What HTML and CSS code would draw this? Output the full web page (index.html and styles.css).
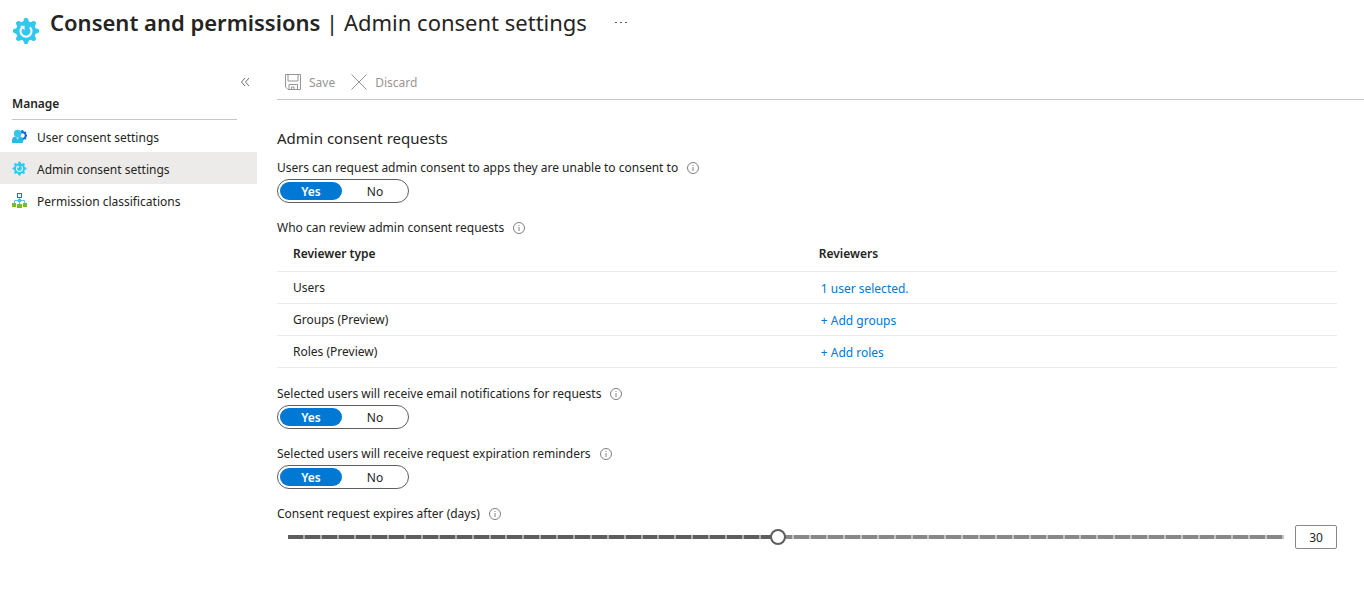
FILE: index.html
```html
<!DOCTYPE html>
<html lang="en">

<head>
    <meta charset="UTF-8">
    <meta name="viewport" content="width=device-width, initial-scale=1.0">
    <link rel="stylesheet" href="styles.css">
    <title>Consent and permissions</title>
</head>

<body>
    <svg class="defs" aria-hidden="true">
        <symbol id="gear" viewBox="0 0 28 28">
            <g fill="#32c8ee">
                <circle cx="14" cy="14" r="10" />
                <g id="teeth">
                    <path d="M11 5l1-3q.4-1 1.200-1h1.600q.8 0 1.200 1l1 3v18l-1 3q-.4 1-1.200 1h-1.600q-.8 0-1.200-1l-1-3z" />
                    <path d="M5 11l-3 1q-1 .4-1 1.200v1.600q0 .8 1 1.200l3 1h18l3-1q1-.4 1-1.200v-1.600q0-.8-1-1.200l-3-1z" />
                </g>
                <use href="#teeth" transform="rotate(45 14 14)" />
            </g>
            <path d="M10.200 10.200a5.500 5.500 0 1 0 7.600 0" fill="none" stroke="#fff" stroke-width="2" />
            <path d="M8 8.800h4.500v4.500z" fill="#fff" />
        </symbol>
        <symbol id="info" viewBox="0 0 12 12">
            <circle cx="6" cy="6" r="5.500" fill="none" stroke="#605e5c" stroke-width="0.800" />
            <path d="M6 5v4M6 3v1" stroke="#605e5c" stroke-width="0.800" />
        </symbol>
    </svg>

    <header class="title-bar">
        <svg class="title-icon"><use href="#gear" /></svg>
        <h1><strong>Consent and permissions</strong> | Admin consent settings</h1>
        <button class="more" aria-label="More">
            <svg width="12" height="2" fill="#605e5c"><rect width="2" height="1" /><rect x="5" width="2" height="1" /><rect x="10" width="2" height="1" /></svg>
        </button>
    </header>

    <div class="layout">
        <nav class="sidebar">
            <button class="collapse" aria-label="Collapse menu">
                <svg width="8" height="8" fill="none" stroke="#605e5c" stroke-width="0.9"><path d="M4 0L0.5 4L4 8M8 0L4.5 4L8 8" /></svg>
            </button>
            <h2>Manage</h2>
            <a class="item" href="#">
                <svg viewBox="0 0 16 16">
                    <circle cx="11" cy="7" r="3.600" fill="none" stroke="#0f6cd6" stroke-width="2" />
                    <path d="M11 1v2.500M11 10.500v2.500M14 7h2M13.200 4.800l1.600-1.600M13.200 9.200l1.600 1.600" stroke="#0f6cd6" stroke-width="2" />
                    <path d="M0 15v-3C0 9.500 1.500 8 4 8h4c2.500 0 3.500 1.500 3.500 4v3z" fill="#2bb8e6" />
                    <path d="M4.300 8h3.400L6 12z" fill="#a5e8f8" />
                    <circle cx="6" cy="4.700" r="4" fill="#32c8ee" />
                </svg>
                User consent settings
            </a>
            <a class="item active" href="#" aria-current="page">
                <svg><use href="#gear" /></svg>
                Admin consent settings
            </a>
            <a class="item" href="#">
                <svg viewBox="0 0 15 15">
                    <path d="M7.500 4v7M2.500 11V7.500h10V11" fill="none" stroke="#5cc4ec" />
                    <rect x="5.500" y="0.500" width="4" height="4" fill="#fff" stroke="#0f78d4" />
                    <rect x="6" y="6" width="3" height="3" fill="#32c8ee" />
                    <g fill="#76bc2d">
                        <rect x="0" y="10" width="4" height="4" />
                        <rect x="5" y="11" width="5" height="4" />
                        <rect x="11" y="10" width="4" height="4" />
                    </g>
                </svg>
                Permission classifications
            </a>
        </nav>

        <main>
            <div class="commands">
                <button disabled>
                    <svg viewBox="0 0 16 16"><path d="M0.500 0.500h15v15H3l-2.500-2.500zM3 0.500v6.500h10V0.500M4 15.500v-5h8.500v5M6.500 15.500v-2.500h2.500v2.500" /></svg>
                    Save
                </button>
                <button disabled>
                    <svg viewBox="0 0 16 16"><path d="M0.500 0.500l15 15M15.500 0.500l-15 15" /></svg>
                    Discard
                </button>
            </div>

            <form class="settings">
                <h2>Admin consent requests</h2>

                <div class="field" role="radiogroup" aria-labelledby="request-label">
                    <div class="label" id="request-label">Users can request admin consent to apps they are unable to consent to <svg><use href="#info" /></svg></div>
                    <div class="toggle">
                        <label><input type="radio" name="request" checked>Yes</label>
                        <label><input type="radio" name="request">No</label>
                    </div>
                </div>

                <div class="field">
                    <div class="label" id="review-label">Who can review admin consent requests <svg><use href="#info" /></svg></div>
                    <table aria-labelledby="review-label">
                        <thead>
                            <tr><th>Reviewer type</th><th>Reviewers</th></tr>
                        </thead>
                        <tbody>
                            <tr><td>Users</td><td><a href="#">1 user selected.</a></td></tr>
                            <tr><td>Groups (Preview)</td><td><a href="#">+ Add groups</a></td></tr>
                            <tr><td>Roles (Preview)</td><td><a href="#">+ Add roles</a></td></tr>
                        </tbody>
                    </table>
                </div>

                <div class="field" role="radiogroup" aria-labelledby="email-label">
                    <div class="label" id="email-label">Selected users will receive email notifications for requests <svg><use href="#info" /></svg></div>
                    <div class="toggle">
                        <label><input type="radio" name="email" checked>Yes</label>
                        <label><input type="radio" name="email">No</label>
                    </div>
                </div>

                <div class="field" role="radiogroup" aria-labelledby="reminder-label">
                    <div class="label" id="reminder-label">Selected users will receive request expiration reminders <svg><use href="#info" /></svg></div>
                    <div class="toggle">
                        <label><input type="radio" name="reminder" checked>Yes</label>
                        <label><input type="radio" name="reminder">No</label>
                    </div>
                </div>

                <div class="field">
                    <label class="label" for="days">Consent request expires after (days) <svg><use href="#info" /></svg></label>
                    <div class="slider">
                        <input type="range" id="days" min="1" max="60" value="30">
                        <input type="text" id="days-value" value="30" aria-label="Days">
                    </div>
                </div>
            </form>
        </main>
    </div>

    <script>
        const range = document.getElementById('days');
        const box = document.getElementById('days-value');

        function paint() {
            const part = (range.value - range.min) / (range.max - range.min);
            range.style.setProperty('--fill', part * 100 + '%');
        }

        range.addEventListener('input', () => {
            box.value = range.value;
            paint();
        });
        box.addEventListener('change', () => {
            range.value = box.value;
            box.value = range.value;
            paint();
        });
        paint();
    </script>
</body>

</html>
```
FILE: styles.css
```css
* {
    box-sizing: border-box;
    margin: 0;
    padding: 0;
}

body {
    background-color: #fff;
    color: #252423;
    font-family: "Segoe UI", "Noto Sans", "Open Sans", sans-serif;
    font-size: 12px;
    line-height: 16px;
}

button,
input {
    font: inherit;
    color: inherit;
}

button {
    background: none;
    border: none;
}

a {
    color: #0078d4;
    text-decoration: none;
}

.defs {
    position: absolute;
    width: 0;
    height: 0;
}

.title-bar {
    display: flex;
    align-items: flex-start;
    padding: 6px 12px 0;
    height: 66px;
}

.title-icon {
    width: 28px;
    height: 28px;
    margin: 11px 10px 0 0;
}

h1 {
    font-size: 22px;
    font-weight: 400;
    line-height: 32px;
}

h1 strong {
    font-weight: 600;
}

.more {
    display: flex;
    align-items: center;
    height: 34px;
    margin-left: 28px;
}

.layout {
    display: flex;
}

.sidebar {
    display: flex;
    flex-direction: column;
    flex: 0 0 257px;
    margin-right: 20px;
}

.collapse {
    display: flex;
    align-self: flex-end;
    padding: 12px 8px 8px;
}

.sidebar h2 {
    margin: 0 20px 0 12px;
    padding: 2px 0 7px;
    border-bottom: 1px solid #c8c6c4;
    font-size: 12px;
    font-weight: 600;
    line-height: 16px;
}

.item {
    display: flex;
    align-items: center;
    gap: 10px;
    height: 32px;
    padding: 4px 12px 0;
    color: inherit;
}

.item svg {
    width: 15px;
    height: 15px;
    margin-bottom: 3px;
}

.item.active {
    background-color: #edebe9;
}

main {
    flex: 1;
    min-width: 0;
}

.commands {
    display: flex;
    gap: 16px;
    height: 34px;
    padding-left: 8px;
    border-bottom: 1px solid #c8c6c4;
}

.commands button {
    display: flex;
    align-items: center;
    gap: 8px;
    color: #979593;
}

.commands svg {
    width: 16px;
    height: 16px;
    margin-bottom: 2px;
    fill: none;
    stroke: #979593;
}

.settings {
    padding: 28px 27px 0 0;
}

.settings h2 {
    font-size: 15px;
    font-weight: 400;
    line-height: 20px;
    margin-bottom: 7px;
}

.field {
    margin-bottom: 12px;
}

.label {
    display: flex;
    align-items: center;
    gap: 9px;
    height: 24px;
    padding-top: 2px;
}

.label svg {
    width: 12px;
    height: 12px;
}

.toggle {
    display: inline-flex;
    gap: 2px;
    height: 24px;
    padding: 2px;
    border: 1px solid #605e5c;
    border-radius: 12px;
    vertical-align: top;
}

.toggle label {
    width: 62px;
    height: 18px;
    border-radius: 9px;
    line-height: 20px;
    text-align: center;
    cursor: pointer;
}

.toggle input {
    position: absolute;
    opacity: 0;
}

.toggle label:has(:checked) {
    background-color: #0078d4;
    color: #fff;
    font-weight: 600;
}

table {
    width: 100%;
    margin-bottom: 13px;
    table-layout: fixed;
    border-collapse: collapse;
}

th,
td {
    height: 32px;
    padding: 2px 0 0 16px;
    border-bottom: 1px solid #edebe9;
    text-align: left;
}

th {
    padding: 0 0 2px 16px;
    font-weight: 600;
}

th:first-child {
    width: 49.6%;
}

td a {
    display: block;
    padding: 2px 0 0 2px;
}

.slider {
    display: flex;
    align-items: center;
    gap: 3px;
    padding-left: 3px;
}

input[type="range"] {
    --step: calc(100% / 59);
    appearance: none;
    flex: 1;
    min-width: 0;
    height: 16px;
    background-image:
        repeating-linear-gradient(to right, transparent 0 calc(var(--step) - 2px), #ffffff80 calc(var(--step) - 2px) var(--step)),
        linear-gradient(to right, #605e5c var(--fill), #8a8886 var(--fill));
    background-position: center;
    background-repeat: no-repeat;
    background-size: calc(100% - 16px) 4px;
}

input[type="range"]::-webkit-slider-thumb {
    appearance: none;
    width: 16px;
    height: 16px;
    border: 2px solid #605e5c;
    border-radius: 50%;
    background-color: #fff;
}

input[type="text"] {
    width: 42px;
    height: 24px;
    padding-top: 2px;
    border: 1px solid #8a8886;
    border-radius: 2px;
    text-align: center;
}
```
